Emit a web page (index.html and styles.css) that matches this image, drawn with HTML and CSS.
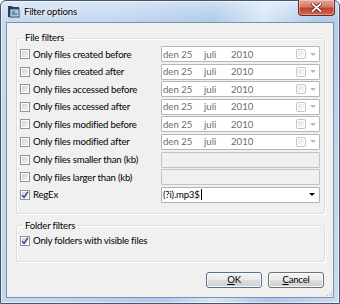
FILE: index.html
```html
<!DOCTYPE html>
<html lang="en">
<head>
    <meta charset="UTF-8">
    <title>Filter options</title>
    <link rel="stylesheet" href="styles.css">
</head>
<body>
    <div class="window">
        <div class="titlebar">
            <svg class="app-icon" width="14" height="15" viewBox="0 0 14 15">
                <path d="M1 2h4l1 1h6v10H1z" fill="#2b3f5e"/>
                <rect x="3" y="5" width="9" height="8" fill="#e8eef6" stroke="#2b3f5e"/>
                <rect x="4.5" y="6.5" width="6" height="5" fill="#5a8fd0"/>
                <rect x="5" y="9" width="2.5" height="2" fill="#4caf50"/>
                <rect x="8" y="7" width="2" height="2" fill="#9cd0f5"/>
            </svg>
            <span class="title">Filter options</span>
            <div class="close">
                <svg width="11" height="9" viewBox="0 0 11 9">
                    <path d="M1.5 1 L9.5 8 M9.5 1 L1.5 8" stroke="#5a1f17" stroke-width="3.4" stroke-linecap="square"/>
                    <path d="M1.5 1 L9.5 8 M9.5 1 L1.5 8" stroke="#fff" stroke-width="1.8" stroke-linecap="square"/>
                </svg>
            </div>
        </div>
        <div class="client">
            <fieldset class="group group-files">
                <legend>File filters</legend>
                <div class="rows">
                    <label class="check"><span class="cb"></span>Only files created before</label>
                    <div class="date"><span class="d1">den 25</span><span class="d2">juli</span><span class="d3">2010</span><span class="cb cb-small"></span><span class="arrow arrow-dis"></span></div>

                    <label class="check"><span class="cb"></span>Only files created after</label>
                    <div class="date"><span class="d1">den 25</span><span class="d2">juli</span><span class="d3">2010</span><span class="cb cb-small"></span><span class="arrow arrow-dis"></span></div>

                    <label class="check"><span class="cb"></span>Only files accessed before</label>
                    <div class="date"><span class="d1">den 25</span><span class="d2">juli</span><span class="d3">2010</span><span class="cb cb-small"></span><span class="arrow arrow-dis"></span></div>

                    <label class="check"><span class="cb"></span>Only files accessed after</label>
                    <div class="date"><span class="d1">den 25</span><span class="d2">juli</span><span class="d3">2010</span><span class="cb cb-small"></span><span class="arrow arrow-dis"></span></div>

                    <label class="check"><span class="cb"></span>Only files modified before</label>
                    <div class="date"><span class="d1">den 25</span><span class="d2">juli</span><span class="d3">2010</span><span class="cb cb-small"></span><span class="arrow arrow-dis"></span></div>

                    <label class="check"><span class="cb"></span>Only files modified after</label>
                    <div class="date"><span class="d1">den 25</span><span class="d2">juli</span><span class="d3">2010</span><span class="cb cb-small"></span><span class="arrow arrow-dis"></span></div>

                    <label class="check"><span class="cb"></span>Only files smaller than (kb)</label>
                    <div class="textbox"></div>

                    <label class="check"><span class="cb"></span>Only files larger than (kb)</label>
                    <div class="textbox"></div>

                    <label class="check"><span class="cb checked"><svg width="8" height="8" viewBox="0 0 8 8"><path d="M1 4 L3 6.5 L7 0.8" fill="none" stroke="#3d5298" stroke-width="1.5"/></svg></span>RegEx</label>
                    <div class="combo"><span class="combo-text">(?i).mp3$</span><span class="caret"></span><span class="arrow"></span></div>
                </div>
            </fieldset>

            <fieldset class="group group-folders">
                <legend>Folder filters</legend>
                <label class="check"><span class="cb checked"><svg width="8" height="8" viewBox="0 0 8 8"><path d="M1 4 L3 6.5 L7 0.8" fill="none" stroke="#3d5298" stroke-width="1.5"/></svg></span>Only folders with visible files</label>
            </fieldset>

            <div class="buttons">
                <button class="btn btn-default"><u>O</u>K</button>
                <button class="btn"><u>C</u>ancel</button>
            </div>

            <svg class="grip" width="7" height="7" viewBox="0 0 7 7">
                <g fill="#b9b9b9">
                    <rect x="5" y="1" width="1" height="1"/>
                    <rect x="3" y="3" width="1" height="1"/><rect x="5" y="3" width="1" height="1"/>
                    <rect x="1" y="5" width="1" height="1"/><rect x="3" y="5" width="1" height="1"/><rect x="5" y="5" width="1" height="1"/>
                </g>
            </svg>
        </div>
    </div>
</body>
</html>
```

FILE: styles.css
```css
body {
    margin: 0;
    font-family: Lato, "Noto Sans", sans-serif;
    font-size: 9.6px;
    letter-spacing: -0.2px;
    color: #000;
}

/* ventana */
.window {
    width: 340px;
    height: 304px;
    box-sizing: border-box;
    border: 1px solid #45566b;
    border-radius: 6px 6px 0 0;
    display: flex;
    flex-direction: column;
    background:
        linear-gradient(180deg, rgba(255,255,255,0.4), rgba(255,255,255,0) 22px),
        linear-gradient(100deg, #c6d9ef 0%, #c0d6ef 30%, #adc9eb 55%, #d7e6f6 68%, #abc7e9 82%, #c9ddf2 100%);
    box-shadow: inset 0 0 0 1px rgba(255,255,255,0.55);
}
.titlebar {
    height: 21px;
    display: flex;
    align-items: flex-start;
}
.app-icon {
    margin: 3px 0 0 6px;
}
.title {
    margin: 4px 0 0 3px;
    line-height: 13px;
    color: #000;
    text-shadow: 0 0 6px #fff, 0 0 3px #fff;
}
.close {
    margin-left: auto;
    margin-right: 4px;
    margin-top: -1px;
    width: 37px;
    height: 16px;
    box-sizing: border-box;
    border: 1px solid #6b2a21;
    border-top: none;
    border-radius: 0 0 4px 4px;
    background: linear-gradient(180deg, #e8a596 0%, #d67a68 45%, #c4412c 55%, #d2654c 100%);
    box-shadow: inset 0 0 0 1px rgba(255,255,255,0.35);
    display: flex;
    align-items: center;
    justify-content: center;
}

/* area cliente */
.client {
    flex: 1;
    position: relative;
    margin: 0 5px 5px 5px;
    border: 1px solid #7f90a5;
    background: #f0f0f0;
    padding: 9px 8px 0 9px;
    display: flex;
    flex-direction: column;
}
.group {
    margin: 0;
    border: 1px solid #d5dfe5;
    border-radius: 3px;
    box-shadow: inset 1px 1px 0 #fff, 1px 1px 0 #fff;
    min-width: 0;
}
.group legend {
    padding: 0 2px;
    margin-left: 3px;
    line-height: 12px;
}
.group-files {
    padding: 2px 3px 10px 3px;
}
.group-folders {
    margin-top: 6px;
    padding: 1px 3px 12px 3px;
}
.rows {
    display: grid;
    grid-template-columns: 141px 159px;
    grid-auto-rows: 16px;
    row-gap: 1.6px;
}
.check {
    display: flex;
    align-items: center;
    gap: 3px;
    height: 16px;
    white-space: nowrap;
}

/* casillas */
.cb {
    width: 10px;
    height: 10px;
    box-sizing: border-box;
    border: 1px solid #939393;
    padding: 1px;
    background: linear-gradient(135deg, #cfd2d6, #f4f4f4) content-box, #fff;
    flex: none;
}
.cb svg {
    display: block;
    margin: -1px;
}
.cb-small {
    border-color: #c4c4c4;
    border-radius: 2px;
    background: linear-gradient(135deg, #e4e4e4, #fafafa) content-box, #fff;
    margin-left: auto;
}

/* controles */
.date, .textbox, .combo {
    box-sizing: border-box;
    height: 16px;
    border: 1px solid #b4b8bd;
    border-radius: 1px;
    display: flex;
    align-items: center;
}
.date {
    background: #fff;
    color: #6d6d6d;
    padding: 0 3px 0 1px;
    letter-spacing: 0;
}
.d1 { width: 41px; }
.d2 { width: 27px; }
.textbox {
    background: #f0f0f0;
    border-color: #c2c2c2;
}
.combo {
    background: #fff;
    border-color: #a9b3c6;
    padding: 0 4px 0 1px;
}
.caret {
    width: 1px;
    height: 11px;
    background: #000;
    margin-left: 1px;
}
.arrow {
    margin-left: auto;
    width: 0;
    height: 0;
    border-left: 3px solid transparent;
    border-right: 3px solid transparent;
    border-top: 3px solid #000;
}
.arrow-dis {
    margin-left: 4px;
    border-top-color: #b8b8b8;
}

/* botones */
.buttons {
    display: flex;
    justify-content: flex-end;
    gap: 6px;
    margin-top: 10px;
    margin-right: 1px;
}
.btn {
    width: 56px;
    height: 16px;
    padding: 0;
    font-family: inherit;
    font-size: inherit;
    letter-spacing: inherit;
    color: #000;
    border: 1px solid #707070;
    border-radius: 3px;
    background: linear-gradient(180deg, #f2f2f2 0%, #ebebeb 48%, #dddddd 52%, #cfcfcf 100%);
    box-shadow: inset 0 0 0 1px rgba(255,255,255,0.8);
}
.btn-default {
    border-color: #5a6f8c;
}
.grip {
    position: absolute;
    right: 0;
    bottom: 0;
}
```
